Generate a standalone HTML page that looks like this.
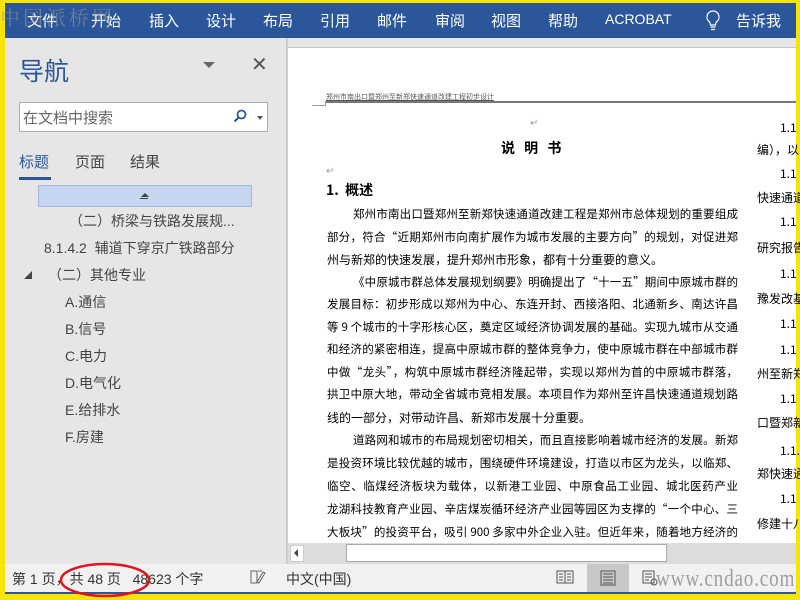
<!DOCTYPE html>
<html><head><meta charset="utf-8"><style>
*{margin:0;padding:0;box-sizing:border-box}
body{width:800px;height:600px;background:#f7e400;position:relative;overflow:hidden;font-family:"Liberation Sans","Noto Sans CJK SC",sans-serif}
.a{position:absolute;white-space:nowrap}
#rib{left:5px;top:3px;width:791px;height:35px;background:#2b579a;color:#fff;font-size:15px}
#rib span{position:absolute;top:7px}
#nav{left:5px;top:38px;width:282px;height:526px;background:#e6e6e6;border-right:1px solid #c8c8c8}
#doc{left:288px;top:48px;width:508px;height:495px;background:#fff}
.t{font-family:"WenQuanYi Zen Hei","Noto Sans CJK SC",sans-serif;font-size:12px;color:#000}
.b{width:411px;text-align:justify;text-align-last:justify;white-space:normal;height:18px;overflow:hidden;font-size:11.5px}
.b2{width:385px}
.n{font-size:14px;color:#444}
</style></head><body>
<div class="a" id="rib">
<span style="left:22px">文件</span><span style="left:86px">开始</span><span style="left:144px">插入</span><span style="left:201px">设计</span><span style="left:258px">布局</span><span style="left:315px">引用</span><span style="left:372px">邮件</span><span style="left:430px">审阅</span><span style="left:486px">视图</span><span style="left:543px">帮助</span><span style="left:600px;font-size:14px;top:8px">ACROBAT</span>
<svg class="a" style="left:700px;top:6px" width="16" height="24" viewBox="0 0 16 24"><path d="M8 2a6 6 0 0 0-4 10.5c1 1 1.5 2 1.5 3.5h5c0-1.5.5-2.5 1.5-3.5A6 6 0 0 0 8 2z M5.5 18h5 M6 20.5h4" fill="none" stroke="#fff" stroke-width="1.2"/></svg>
<span style="left:731px">告诉我</span>
</div>
<div class="a" style="left:0;top:2px;font-size:20px;color:rgba(150,150,150,0.6);letter-spacing:3px;font-family:'Noto Serif CJK SC',serif">中国派桥网</div>
<div class="a" id="nav">
<div class="a" style="left:14px;top:14px;font-size:25px;color:#2b579a">导航</div>
<div class="a" style="left:198px;top:24px;width:0;height:0;border-left:6px solid transparent;border-right:6px solid transparent;border-top:6px solid #666"></div>
<div class="a" style="left:246px;top:14px;font-size:20px;color:#555">✕</div>
<div class="a" style="left:14px;top:64px;width:249px;height:30px;background:#fff;border:1px solid #abadb3"></div>
<div class="a" style="left:18px;top:69px;font-size:15px;color:#666">在文档中搜索</div>
<svg class="a" style="left:228px;top:71px" width="14" height="14" viewBox="0 0 14 14"><circle cx="8.5" cy="5.5" r="4" fill="none" stroke="#2b579a" stroke-width="1.8"/><path d="M5.5 8.5L1.5 12.5" stroke="#2b579a" stroke-width="2"/></svg>
<div class="a" style="left:252px;top:78px;border-left:3px solid transparent;border-right:3px solid transparent;border-top:4px solid #555"></div>
<div class="a" style="left:14px;top:113px;font-size:15px;color:#2b579a">标题</div>
<div class="a" style="left:70px;top:113px;font-size:15px;color:#444">页面</div>
<div class="a" style="left:125px;top:113px;font-size:15px;color:#444">结果</div>
<div class="a" style="left:14px;top:139px;width:32px;height:3px;background:#2b579a"></div>
<div class="a" style="left:33px;top:147px;width:214px;height:22px;background:#c5d7f0;border:1px solid #9fb9e0"></div>
<div class="a" style="left:136px;top:155px;border-left:4px solid transparent;border-right:4px solid transparent;border-bottom:4px solid #444"></div>
<div class="a" style="left:135px;top:160px;width:8px;height:1px;background:#444"></div>
<div class="a n" style="left:64px;top:173px">（二）桥梁与铁路发展规...</div>
<div class="a n" style="left:39px;top:200px">8.1.4.2&nbsp; 辅道下穿京广铁路部分</div>
<div class="a" style="left:19px;top:233px;border-left:8px solid transparent;border-bottom:8px solid #444"></div>
<div class="a n" style="left:43px;top:227px">（二）其他专业</div>
<div class="a n" style="left:60px;top:254px">A.通信</div>
<div class="a n" style="left:60px;top:281px">B.信号</div>
<div class="a n" style="left:60px;top:308px">C.电力</div>
<div class="a n" style="left:60px;top:335px">D.电气化</div>
<div class="a n" style="left:60px;top:362px">E.给排水</div>
<div class="a n" style="left:60px;top:389px">F.房建</div>
</div>
<div class="a" style="left:288px;top:38px;width:508px;height:10px;background:#e6e6e6;border-bottom:1px solid #c6c6c6"></div>
<div class="a" id="doc">
<div class="a" style="left:38px;top:44px;font-size:7px;color:#555;text-decoration:underline">郑州市南出口暨郑州至新郑快速通道改建工程初步设计</div>
<div class="a" style="left:38px;top:53px;width:470px;height:2px;border-top:1px solid #777;border-bottom:1px solid #777"></div>
<div class="a" style="left:24px;top:57px;width:14px;height:1px;background:#999"></div>
<div class="a" style="left:37px;top:53px;width:1px;height:5px;background:#999"></div>
<div class="a t" style="left:242px;top:66px;color:#999;font-size:10px">↵</div>
<div class="a t" style="left:213px;top:90px;font-weight:bold;font-size:14px;letter-spacing:3px">说 明 书</div>
<div class="a t" style="left:38px;top:114px;color:#999;font-size:10px">↵</div>
<div class="a t" style="left:38px;top:132px;font-weight:bold;font-size:14px">1.&nbsp; 概述</div>
</div>
<div class="a t b b2" style="left:353px;top:206px">郑州市南出口暨郑州至新郑快速通道改建工程是郑州市总体规划的重要组成</div>
<div class="a t b" style="left:327px;top:229px">部分，符合“近期郑州市向南扩展作为城市发展的主要方向”的规划，对促进郑</div>
<div class="a t" style="left:327px;top:251px">州与新郑的快速发展，提升郑州市形象，都有十分重要的意义。</div>
<div class="a t b b2" style="left:353px;top:274px">《中原城市群总体发展规划纲要》明确提出了“十一五”期间中原城市群的</div>
<div class="a t b" style="left:327px;top:296px">发展目标：初步形成以郑州为中心、东连开封、西接洛阳、北通新乡、南达许昌</div>
<div class="a t b" style="left:327px;top:319px">等 9 个城市的十字形核心区，奠定区域经济协调发展的基础。实现九城市从交通</div>
<div class="a t b" style="left:327px;top:341px">和经济的紧密相连，提高中原城市群的整体竞争力，使中原城市群在中部城市群</div>
<div class="a t b" style="left:327px;top:364px">中做“龙头”，构筑中原城市群经济隆起带，实现以郑州为首的中原城市群落，</div>
<div class="a t b" style="left:327px;top:386px">拱卫中原大地，带动全省城市竞相发展。本项目作为郑州至许昌快速通道规划路</div>
<div class="a t" style="left:327px;top:409px">线的一部分，对带动许昌、新郑市发展十分重要。</div>
<div class="a t b b2" style="left:353px;top:432px">道路网和城市的布局规划密切相关，而且直接影响着城市经济的发展。新郑</div>
<div class="a t b" style="left:327px;top:455px">是投资环境比较优越的城市，围绕硬件环境建设，打造以市区为龙头，以临郑、</div>
<div class="a t b" style="left:327px;top:478px">临空、临煤经济板块为载体，以新港工业园、中原食品工业园、城北医药产业园、</div>
<div class="a t b" style="left:327px;top:501px">龙湖科技教育产业园、辛店煤炭循环经济产业园等园区为支撑的“一个中心、三</div>
<div class="a t b" style="left:327px;top:524px">大板块”的投资平台，吸引 900 多家中外企业入驻。但近年来，随着地方经济的</div>
<div class="a t" style="left:780px;top:119px">1.1</div><div class="a t" style="left:757px;top:141px">编），以</div>
<div class="a t" style="left:780px;top:165px">1.1</div><div class="a t" style="left:757px;top:189px">快速通道</div>
<div class="a t" style="left:780px;top:213px">1.1</div><div class="a t" style="left:757px;top:239px">研究报告</div>
<div class="a t" style="left:780px;top:265px">1.1</div><div class="a t" style="left:757px;top:290px">豫发改基</div>
<div class="a t" style="left:780px;top:315px">1.1</div><div class="a t" style="left:780px;top:341px">1.1</div>
<div class="a t" style="left:757px;top:365px">州至新郑</div><div class="a t" style="left:780px;top:390px">1.1</div>
<div class="a t" style="left:757px;top:414px">口暨郑新</div><div class="a t" style="left:780px;top:442px">1.1.</div>
<div class="a t" style="left:757px;top:465px">郑快速通</div><div class="a t" style="left:780px;top:490px">1.1</div>
<div class="a t" style="left:757px;top:515px">修建十八</div>
<div class="a" style="left:288px;top:543px;width:508px;height:21px;background:#dcdcdc"></div>
<div class="a" style="left:290px;top:545px;width:14px;height:17px;background:#fff;border:1px solid #ccc"></div>
<div class="a" style="left:294px;top:549px;border-top:4px solid transparent;border-bottom:4px solid transparent;border-right:4px solid #444"></div>
<div class="a" style="left:346px;top:544px;width:321px;height:18px;background:#fff;border:1px solid #aaa"></div>
<div class="a" style="left:5px;top:564px;width:791px;height:28px;background:#f1f1f1;font-size:14px;color:#333"></div>
<div class="a" style="left:5px;top:592px;width:791px;height:2px;background:#2b579a"></div>
<div class="a" style="left:12px;top:569px;font-size:14px;color:#333">第 1 页，共 48 页&nbsp;&nbsp; 48623 个字</div>
<svg class="a" style="left:249px;top:569px" width="18" height="16" viewBox="0 0 18 16"><path d="M2 2h6v12H2z M9 2h4 M10 14l6-10-2-1-6 10z" fill="none" stroke="#666"/></svg>
<div class="a" style="left:286px;top:569px;font-size:14px;color:#333">中文(中国)</div>
<svg class="a" style="left:556px;top:569px" width="18" height="16" viewBox="0 0 18 16"><path d="M1 2h16v12H1z M9 2v12 M3 5h4M3 8h4M3 11h4M11 5h4M11 8h4M11 11h4" fill="none" stroke="#555"/></svg>
<div class="a" style="left:587px;top:564px;width:42px;height:28px;background:#c8c8c8"></div>
<svg class="a" style="left:600px;top:570px" width="16" height="16" viewBox="0 0 16 16"><path d="M1 1h14v14H1z M3 4h10M3 7h10M3 10h10M3 13h10" fill="none" stroke="#555"/></svg>
<svg class="a" style="left:642px;top:570px" width="16" height="16" viewBox="0 0 16 16"><path d="M1 1h11v12H1z M3 4h7M3 7h7M3 10h4" fill="none" stroke="#555"/><circle cx="12" cy="12" r="3" fill="none" stroke="#555"/></svg>
<div class="a" style="left:656px;top:566px;font-family:'Liberation Serif',serif;font-size:24px;color:rgba(130,130,130,0.75);letter-spacing:1px;transform:scaleX(0.8);transform-origin:left">www.cndao.com</div>
<svg class="a" style="left:58px;top:562px" width="95" height="38" viewBox="0 0 95 38"><ellipse cx="47" cy="18" rx="44" ry="16" fill="none" stroke="#e0141e" stroke-width="2.5"/></svg>
</body></html>
